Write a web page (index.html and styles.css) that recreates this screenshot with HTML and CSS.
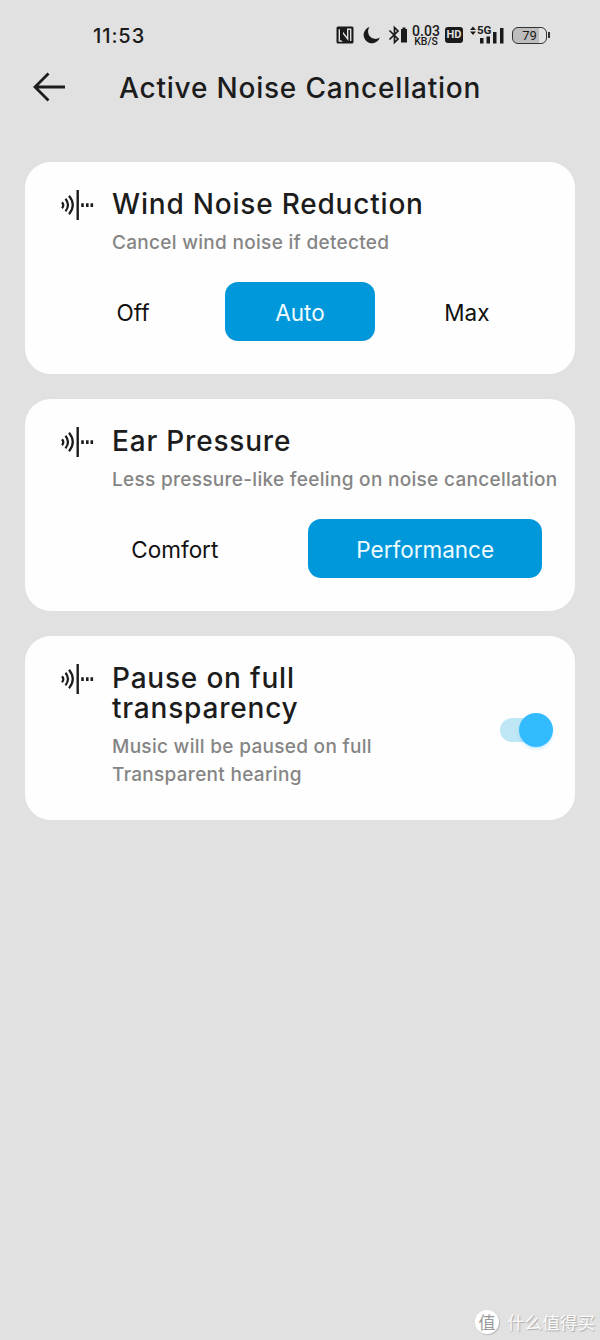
FILE: index.html
```html
<!DOCTYPE html>
<html lang="en">
<head>
    <meta charset="UTF-8">
    <meta name="viewport" content="width=device-width, initial-scale=1.0">
    <title>Active Noise Cancellation</title>
    <link rel="stylesheet" href="styles.css">
</head>
<body>
    <!-- Shared icon -->
    <svg class="sprite">
        <symbol id="noise-icon" viewBox="0 0 34 32">
            <g fill="none" stroke="#1c1c1c" stroke-width="2.200">
                <path d="M1 13.200q2.600 3 0 6"/>
                <path d="M4.500 9.800q5 6.300 0 12.600"/>
                <path d="M8 6.800q7.600 9.200 0 18.500"/>
                <path d="M16.700 1v30" stroke-width="2.400"/>
                <path d="M20.200 16.200h2.600M25 16.200h2.600M29.500 16.200h2.600" stroke-width="3.800"/>
            </g>
        </symbol>
    </svg>

    <div class="status-bar">
        <span class="time">11:53</span>
        <div class="status-icons">
            <svg class="nfc" width="18" height="18" viewBox="0 0 18 18">
                <rect x="0.500" y="0.500" width="17" height="17" rx="1.500" fill="#1a1a1a"/>
                <path d="M3.300 3.200V15H6.300M6.300 6L11.700 13V3.200H14.700V15" fill="none" stroke="#e1e1e1" stroke-width="1.400"/>
                <path d="M6.300 3.200V15" fill="none" stroke="#1a1a1a" stroke-width="1.400"/>
            </svg>
            <svg class="moon" width="17" height="18" viewBox="0 0 17 18">
                <path d="M6.500 1A8.300 8.300 0 1 0 16.800 11.600A7.500 7.500 0 0 1 6.500 1Z" fill="#1a1a1a"/>
            </svg>
            <svg class="bluetooth" width="20" height="20" viewBox="0 0 20 20">
                <path d="M1.500 5.500L10 14L6.500 17.500V2.500L10 6L1.500 14.500" fill="none" stroke="#1a1a1a" stroke-width="1.700"/>
                <path d="M14.500 2.500h3v1.500h1.500V17.500h-6V4h1.500Z" fill="#1a1a1a"/>
            </svg>
            <div class="speed">
                <span class="speed-value">0.03</span>
                <span class="speed-unit">KB/S</span>
            </div>
            <span class="hd">HD</span>
            <div class="network">
                <svg width="34" height="20" viewBox="0 0 34 20">
                    <path d="M0 5L3 1.500L6 5ZM0 6.500L3 10L6 6.500Z" fill="#1a1a1a"/>
                    <path d="M10 13h3.500v5.500H10ZM16.500 11.500h3.500v7H16.500ZM23 7h3.500v11.500H23ZM30 3h3.500v15.500h-3.500Z" fill="#1a1a1a"/>
                </svg>
                <span class="network-type">5G</span>
            </div>
            <div class="battery"><span>79</span></div>
        </div>
    </div>

    <header>
        <svg class="back" width="33" height="30" viewBox="0 0 33 30">
            <path d="M15.500 1.500L2 15L15.500 28.500M2 15H32" fill="none" stroke="#1c1c1c" stroke-width="2.800"/>
        </svg>
        <h1>Active Noise Cancellation</h1>
    </header>

    <main>
        <section class="card">
            <div class="card-header">
                <svg class="icon"><use href="#noise-icon"/></svg>
                <div class="card-text">
                    <h2>Wind Noise Reduction</h2>
                    <p>Cancel wind noise if detected</p>
                </div>
            </div>
            <div class="options three">
                <button class="option">Off</button>
                <button class="option active">Auto</button>
                <button class="option">Max</button>
            </div>
        </section>

        <section class="card">
            <div class="card-header">
                <svg class="icon"><use href="#noise-icon"/></svg>
                <div class="card-text">
                    <h2>Ear Pressure</h2>
                    <p>Less pressure-like feeling on noise cancellation</p>
                </div>
            </div>
            <div class="options two">
                <button class="option">Comfort</button>
                <button class="option active">Performance</button>
            </div>
        </section>

        <section class="card pause">
            <div class="card-header">
                <svg class="icon"><use href="#noise-icon"/></svg>
                <div class="card-text">
                    <h2>Pause on full<br>transparency</h2>
                    <p>Music will be paused on full<br>Transparent hearing</p>
                </div>
                <div class="toggle"><div class="toggle-knob"></div></div>
            </div>
        </section>
    </main>

    <footer>
        <span class="logo">值</span>
        <span class="brand">什么值得买</span>
    </footer>
</body>
</html>
```
FILE: styles.css
```css
* {
    margin: 0;
    padding: 0;
    box-sizing: border-box;
}

body {
    height: 1340px;
    display: flex;
    flex-direction: column;
    background: #e1e1e1;
    color: #1c1c1c;
    font-family: Inter, Roboto, sans-serif;
    white-space: nowrap;
    overflow: hidden;
}

.sprite {
    position: absolute;
    width: 0;
    height: 0;
}

/* Status bar */
.status-bar {
    height: 58px;
    padding: 12px 53px 0 93px;
    display: flex;
    align-items: center;
    justify-content: space-between;
    color: #1a1a1a;
}

.time {
    padding-top: 1px;
    font-size: 20px;
    font-weight: 500;
    letter-spacing: 0.9px;
}

.status-icons {
    display: flex;
    align-items: center;
}

.moon {
    margin-left: 9px;
}

.bluetooth {
    margin-left: 8px;
}

.speed {
    width: 28px;
    margin-left: 4px;
    display: flex;
    flex-direction: column;
    align-items: center;
    font-family: Roboto, sans-serif;
    font-weight: 500;
}

.speed-value {
    font-size: 14px;
    line-height: 12px;
}

.speed-unit {
    font-size: 10.5px;
    line-height: 9px;
}

.hd {
    width: 18px;
    height: 16px;
    margin-left: 5px;
    border-radius: 3px;
    background: #1a1a1a;
    color: #e1e1e1;
    font-family: Roboto, sans-serif;
    font-size: 11px;
    font-weight: 700;
    line-height: 16px;
    text-align: center;
}

.network {
    position: relative;
    height: 20px;
    margin-left: 7px;
}

.network-type {
    position: absolute;
    left: 7px;
    top: -1px;
    font-family: Roboto, sans-serif;
    font-size: 11.5px;
    font-weight: 700;
    line-height: 13px;
}

.battery {
    position: relative;
    width: 35px;
    height: 17px;
    margin-left: 8px;
    border: 1.5px solid #333;
    border-radius: 6px;
    background: linear-gradient(to right, #bdbdbd 79%, #e1e1e1 79%);
    font-family: Roboto, sans-serif;
    font-size: 13px;
    line-height: 15px;
    text-align: center;
}

.battery::after {
    content: "";
    position: absolute;
    right: -4px;
    top: 4px;
    width: 2px;
    height: 6px;
    background: #333;
}

/* Page header */
header {
    height: 60px;
    padding-left: 33px;
    display: flex;
    align-items: center;
}

.back {
    margin-top: -3px;
}

h1 {
    margin-left: 53px;
    font-size: 28px;
    font-weight: 500;
    letter-spacing: 0.8px;
}

main {
    padding: 44px 25px 0;
    display: flex;
    flex-direction: column;
    gap: 25px;
}

/* Cards */
.card {
    padding: 26px 33px 33px;
    border-radius: 26px;
    background: #fefefe;
}

.card.pause {
    padding-bottom: 31px;
}

.card-header {
    display: flex;
}

.icon {
    width: 34px;
    height: 32px;
    margin: 1px 17px 0 3px;
    flex-shrink: 0;
}

.card-text {
    flex: 1;
}

h2 {
    padding-top: 1px;
    font-size: 28px;
    font-weight: 500;
    line-height: 30px;
    letter-spacing: 0.8px;
}

p {
    margin-top: 10px;
    color: #858585;
    font-size: 19px;
    font-weight: 500;
    line-height: 28px;
    letter-spacing: 0.3px;
}

.options {
    margin-top: 25px;
    display: grid;
    gap: 16.7px;
}

.three {
    grid-template-columns: repeat(3, 1fr);
}

.two {
    grid-template-columns: repeat(2, 1fr);
}

.option {
    height: 59px;
    padding-top: 2px;
    border: none;
    border-radius: 13px;
    background: none;
    color: #111;
    font-family: inherit;
    font-size: 22.5px;
    letter-spacing: 0;
}

.option.active {
    background: #0098db;
    color: #effcff;
}

.toggle {
    width: 53px;
    height: 34px;
    margin: 51px -11px 0 0;
    display: flex;
    align-items: center;
    justify-content: flex-end;
}

.toggle::before {
    content: "";
    width: 42px;
    height: 24px;
    margin-right: -23px;
    border-radius: 12px;
    background: #bfe6f5;
}

.toggle-knob {
    position: relative;
    width: 34px;
    height: 34px;
    border-radius: 50%;
    background: #33bbff;
    box-shadow: 0 2px 3px rgba(51, 187, 255, 0.25);
}

/* Watermark */
footer {
    margin-top: auto;
    padding: 0 5px 5px 0;
    display: flex;
    align-items: center;
    justify-content: flex-end;
    gap: 8px;
    color: #fafafa;
    font-family: 'Noto Sans CJK SC', sans-serif;
    text-shadow: 1px 1px 1px #aaa;
}

.logo {
    width: 24px;
    height: 24px;
    border-radius: 50%;
    background: #fff;
    box-shadow: 1px 1px 1px #bbb;
    color: #999;
    font-size: 17px;
    line-height: 24px;
    text-align: center;
    text-shadow: none;
}

.brand {
    font-size: 17.6px;
    line-height: 26px;
}
```
